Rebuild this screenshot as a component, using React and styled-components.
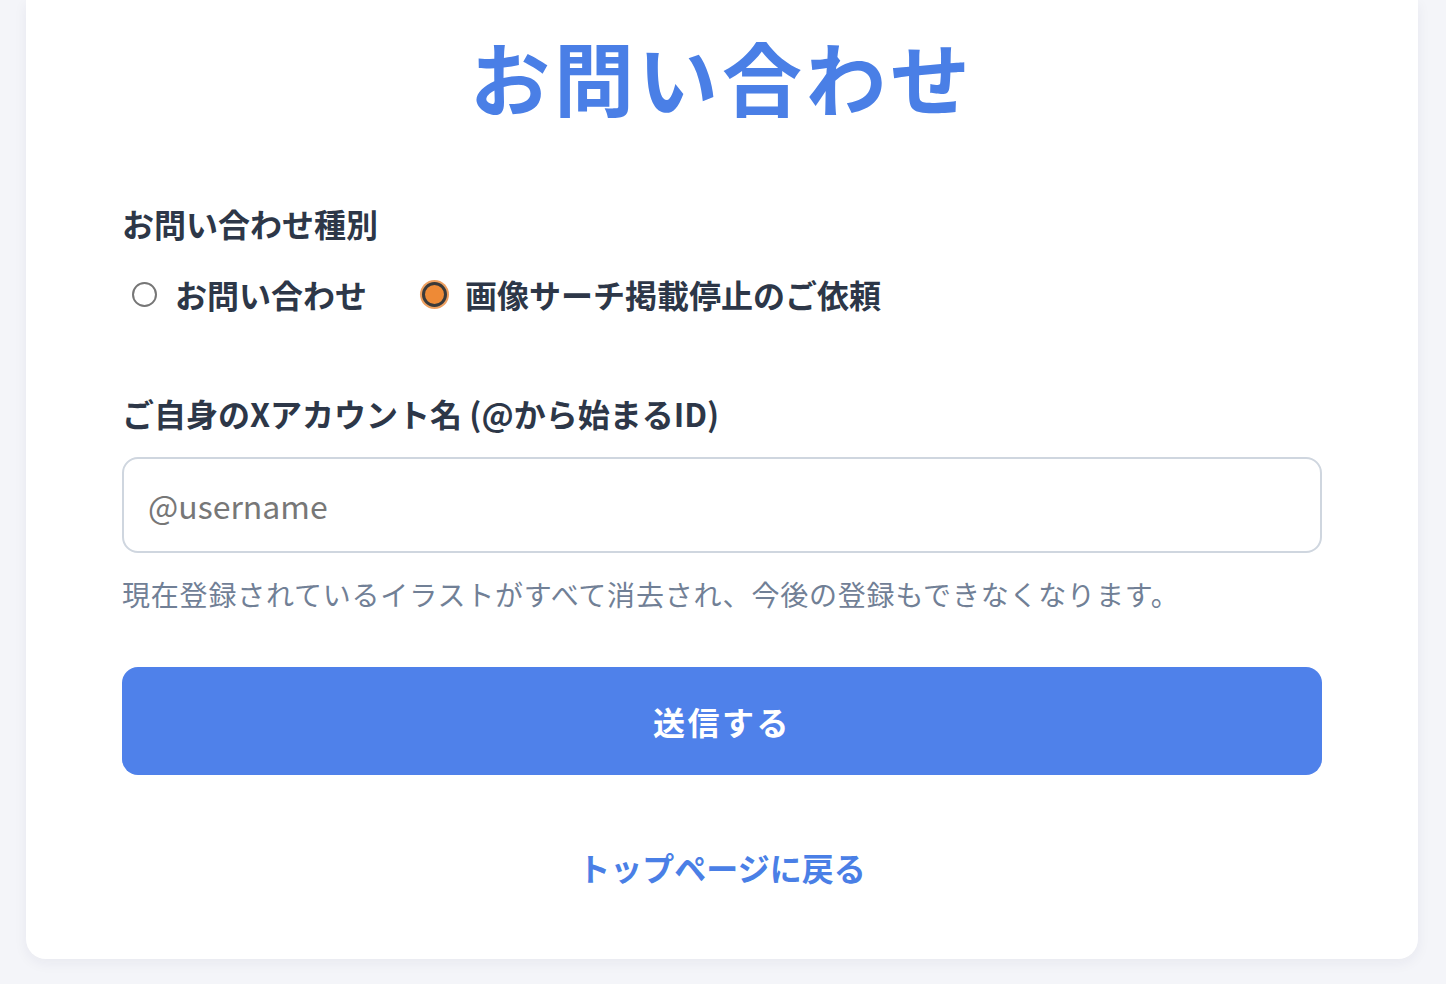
import styled, { createGlobalStyle } from "styled-components";

const GlobalStyle = createGlobalStyle`
  html, body {
    margin: 0;
    padding: 0;
    background: #f4f5f9;
    font-family: "Noto Sans CJK JP", "Noto Sans", sans-serif;
  }
`;

const Page = styled.div`
  padding: 0 28px 26px 26px;
`;

const Card = styled.div`
  background: #fff;
  border-radius: 0 0 20px 20px;
  box-shadow: 0 4px 14px rgba(30, 40, 80, 0.06);
  padding: 27px 96px 68px;
  display: flex;
  flex-direction: column;
`;

const Title = styled.h1`
  margin: 0 0 76px;
  font-size: 80px;
  line-height: 96px;
  font-weight: 700;
  color: #4a7fe6;
  text-align: center;
  letter-spacing: 4px;
`;

const Label = styled.div`
  font-size: 32px;
  line-height: 48px;
  font-weight: 700;
  color: #2d3748;
  margin-bottom: ${p => p.$gap || 0}px;
`;

const RadioRow = styled.div`
  display: flex;
  align-items: center;
  gap: 55px;
  padding-left: 10px;
  margin-bottom: 71px;
`;

const RadioOption = styled.label`
  display: flex;
  align-items: center;
  gap: 18px;
  font-size: 32px;
  line-height: 48px;
  font-weight: 700;
  color: #2d3748;
`;

const RadioDot = styled.span`
  box-sizing: border-box;
  width: 25px;
  height: 25px;
  border-radius: 50%;
  border: ${p => (p.$checked ? "3px solid #3a3a3a" : "2px solid #767676")};
  background: ${p => (p.$checked ? "#ee8a36" : "#fff")};
  box-shadow: ${p => (p.$checked ? "0 0 0 2px #eea060" : "none")};
`;

const Input = styled.input`
  box-sizing: border-box;
  width: 100%;
  height: 96px;
  border: 2px solid #cfd6df;
  border-radius: 16px;
  padding: 0 24px;
  font-family: inherit;
  font-size: 32px;
  color: #2d3748;
  outline: none;
  &::placeholder {
    color: #777;
  }
`;

const Help = styled.p`
  margin: 20px 0 52px;
  font-size: 28px;
  line-height: 42px;
  letter-spacing: 0.8px;
  color: #718096;
`;

const SubmitButton = styled.button`
  height: 108px;
  border: none;
  border-radius: 16px;
  background: #4f81ea;
  color: #fff;
  font-family: inherit;
  font-size: 32px;
  font-weight: 700;
  letter-spacing: 2.5px;
  cursor: pointer;
`;

const BackLink = styled.a`
  margin-top: 68px;
  align-self: center;
  font-size: 32px;
  line-height: 48px;
  font-weight: 700;
  color: #4a7fe6;
  text-decoration: none;
`;

export default function App() {
  return (
    <Page>
      <GlobalStyle />
      <Card>
        <Title>お問い合わせ</Title>
        <Label $gap={23}>お問い合わせ種別</Label>
        <RadioRow>
          <RadioOption>
            <RadioDot />
            お問い合わせ
          </RadioOption>
          <RadioOption>
            <RadioDot $checked />
            画像サーチ掲載停止のご依頼
          </RadioOption>
        </RadioRow>
        <Label $gap={20}>ご自身のXアカウント名 (@から始まるID)</Label>
        <Input placeholder="@username" />
        <Help>現在登録されているイラストがすべて消去され、今後の登録もできなくなります。</Help>
        <SubmitButton>送信する</SubmitButton>
        <BackLink href="#">トップページに戻る</BackLink>
      </Card>
    </Page>
  );
}
